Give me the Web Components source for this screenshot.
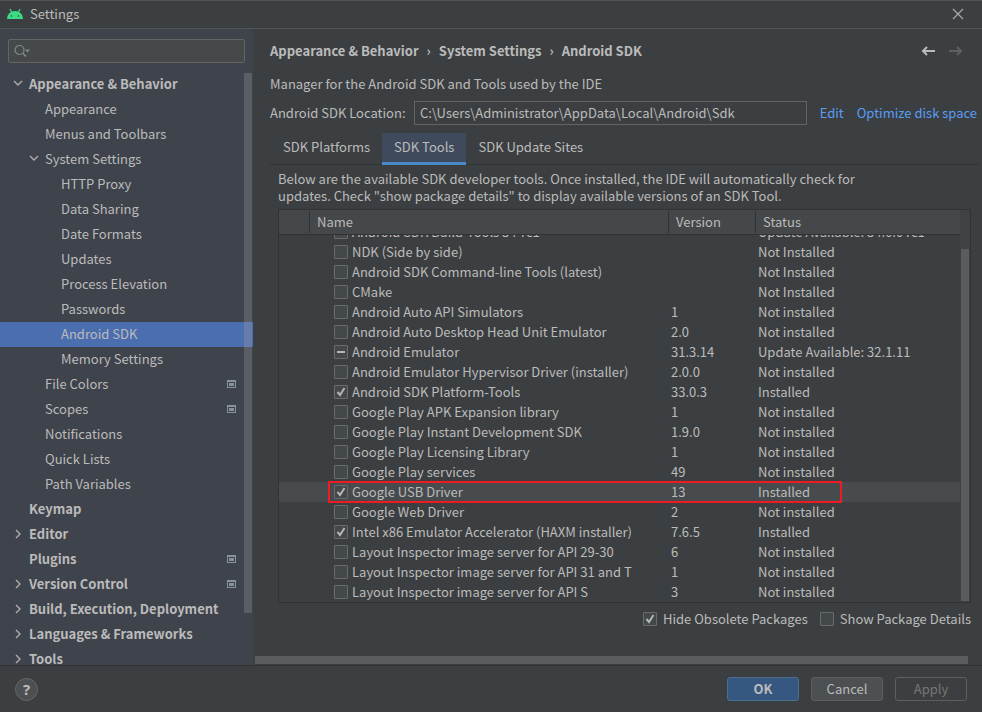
<!DOCTYPE html>
<html lang="en">
<head>
<meta charset="utf-8">
<title>Settings</title>
<style>
  html, body { height: 100%; margin: 0; }
  body {
    background: #3c3f41;
    color: #bbbbbb;
    font: 13px/20px "Noto Sans CJK SC", "Noto Sans", sans-serif;
    --panel: #3c3f41;
    --sidebar: #3f434c;
    --line: #323232;
    --border: #646464;
    --muted: #777777;
    --link: #589df6;
    --select: #4b6eaf;
  }
</style>
</head>
<body>
<settings-dialog>
  <title-bar slot="title">Settings</title-bar>

  <settings-sidebar slot="sidebar">
    <tree-item level="0" state="open">Appearance &amp; Behavior</tree-item>
    <tree-item level="1">Appearance</tree-item>
    <tree-item level="1">Menus and Toolbars</tree-item>
    <tree-item level="1" state="open">System Settings</tree-item>
    <tree-item level="2">HTTP Proxy</tree-item>
    <tree-item level="2">Data Sharing</tree-item>
    <tree-item level="2">Date Formats</tree-item>
    <tree-item level="2">Updates</tree-item>
    <tree-item level="2">Process Elevation</tree-item>
    <tree-item level="2">Passwords</tree-item>
    <tree-item level="2" selected>Android SDK</tree-item>
    <tree-item level="2">Memory Settings</tree-item>
    <tree-item level="1" project>File Colors</tree-item>
    <tree-item level="1" project>Scopes</tree-item>
    <tree-item level="1">Notifications</tree-item>
    <tree-item level="1">Quick Lists</tree-item>
    <tree-item level="1">Path Variables</tree-item>
    <tree-item level="0">Keymap</tree-item>
    <tree-item level="0" state="closed">Editor</tree-item>
    <tree-item level="0" project>Plugins</tree-item>
    <tree-item level="0" state="closed" project>Version Control</tree-item>
    <tree-item level="0" state="closed">Build, Execution, Deployment</tree-item>
    <tree-item level="0" state="closed">Languages &amp; Frameworks</tree-item>
    <tree-item level="0" state="closed">Tools</tree-item>
  </settings-sidebar>

  <sdk-page slot="page">
    <crumb-bar slot="crumbs"></crumb-bar>
    <sdk-location slot="location"></sdk-location>
    <tab-strip slot="tabs"></tab-strip>
    <sdk-table slot="table"></sdk-table>
    <check-box slot="options" checked>Hide Obsolete Packages</check-box>
    <check-box slot="options">Show Package Details</check-box>
  </sdk-page>

  <dialog-button slot="actions" kind="primary">OK</dialog-button>
  <dialog-button slot="actions">Cancel</dialog-button>
  <dialog-button slot="actions" kind="disabled">Apply</dialog-button>
</settings-dialog>

<script>
class SettingsDialog extends HTMLElement {
  connectedCallback() {
    this.attachShadow({ mode: "open" })
    this.shadowRoot.innerHTML = `
      <style>
        :host {
          display: flex;
          flex-direction: column;
          height: 100vh;
          overflow: hidden;
          background: var(--panel);
        }

        main {
          flex: 1;
          min-height: 0;
          display: grid;
          grid-template-columns: 253px minmax(0, 1fr);
          grid-template-rows: minmax(0, 1fr);
        }

        footer {
          box-sizing: border-box;
          height: 47px;
          display: flex;
          align-items: center;
          gap: 12px;
          padding: 0 15px;
          border-top: 1px solid var(--line);
        }

        .help {
          box-sizing: border-box;
          width: 23px;
          height: 23px;
          padding: 0;
          margin-right: auto;
          border: 1px solid #646668;
          border-radius: 50%;
          background: #4c5052;
          color: inherit;
          font: bold 15px/20px "Noto Sans", sans-serif;
        }
      </style>

      <slot name="title"></slot>
      <main>
        <slot name="sidebar"></slot>
        <slot name="page"></slot>
      </main>
      <footer>
        <button class="help" aria-label="Help">?</button>
        <slot name="actions"></slot>
      </footer>
    `
  }
}

class TitleBar extends HTMLElement {
  connectedCallback() {
    this.attachShadow({ mode: "open" })
    this.shadowRoot.innerHTML = `
      <style>
        :host {
          box-sizing: border-box;
          display: flex;
          align-items: center;
          gap: 7px;
          height: 29px;
          padding: 0 18px 1px 7px;
          border-top: 1px solid #515456;
          border-bottom: 1px solid #515456;
        }

        button {
          display: flex;
          margin-left: auto;
          padding: 0;
          border: 0;
          background: none;
        }
      </style>

      <svg width="16" height="16" viewBox="0 0 16 16">
        <path d="M0 13a8 8 0 0 1 16 0z" fill="#3ddc84"/>
        <path d="M3 3l2 4M13 3l-2 4" stroke="#3ddc84" stroke-width="1.2" fill="none"/>
        <circle cx="4.5" cy="10" r="0.8" fill="#2b4d3b"/>
        <circle cx="11.5" cy="10" r="0.8" fill="#2b4d3b"/>
      </svg>
      <span><slot></slot></span>
      <button aria-label="Close">
        <svg width="12" height="12" viewBox="0 0 12 12">
          <path d="M1 1l10 10M11 1L1 11" stroke="#a8a9aa" stroke-width="1.2" fill="none"/>
        </svg>
      </button>
    `
  }
}

class SettingsSidebar extends HTMLElement {
  connectedCallback() {
    this.attachShadow({ mode: "open" })
    this.shadowRoot.innerHTML = `
      <style>
        :host {
          display: flex;
          flex-direction: column;
          min-height: 0;
          background: var(--sidebar);
        }

        label {
          box-sizing: border-box;
          display: flex;
          align-items: center;
          height: 24px;
          margin: 10px 8px 9px;
          padding: 0 5px;
          border: 1px solid var(--border);
          border-radius: 2px;
          background: #45494a;
        }

        input {
          flex: 1;
          min-width: 0;
          border: 0;
          outline: 0;
          background: none;
          color: inherit;
          font: inherit;
        }

        .tree {
          position: relative;
          flex: 1;
          min-height: 0;
          overflow: hidden;
        }

        .thumb {
          position: absolute;
          top: 1px;
          right: 1px;
          width: 8px;
          height: 91%;
          background: rgba(166, 166, 166, 0.28);
        }
      </style>

      <label>
        <svg width="17" height="14" viewBox="0 0 17 14">
          <circle cx="5.5" cy="6" r="4.500" stroke="#7f8b91" stroke-width="1.2" fill="none"/>
          <path d="M9 9.5l3 3" stroke="#7f8b91" stroke-width="1.600"/>
          <path d="M11 5.5h5l-2.500 3z" fill="#7f8b91"/>
        </svg>
        <input type="text" aria-label="Search settings">
      </label>
      <div class="tree">
        <slot></slot>
        <div class="thumb"></div>
      </div>
    `
  }
}

class TreeItem extends HTMLElement {
  connectedCallback() {
    const level = Number(this.getAttribute("level"))
    const state = this.getAttribute("state")
    const arrows = { open: "M2 3l4 4 4-4", closed: "M4 2l4 4-4 4" }

    this.attachShadow({ mode: "open" })
    this.shadowRoot.innerHTML = `
      <style>
        :host {
          box-sizing: border-box;
          display: flex;
          align-items: center;
          height: 25px;
          padding-right: 17px;
          padding-bottom: 2px;
          padding-left: ${12 + level * 16}px;
          font-weight: ${level === 0 ? "bold" : "normal"};
        }

        :host([selected]) {
          background: var(--select);
        }

        .arrow {
          width: 12px;
          height: 12px;
          margin-right: 5px;
        }

        .text {
          flex: 1;
          white-space: nowrap;
        }
      </style>

      <svg class="arrow" viewBox="0 0 12 12">
        ${state ? `<path d="${arrows[state]}" stroke="#adadad" stroke-width="1.4" fill="none"/>` : ""}
      </svg>
      <span class="text"><slot></slot></span>
      ${this.hasAttribute("project") ? `
        <svg width="9" height="8" viewBox="0 0 9 8">
          <path d="M0 0h9v8H0zM1 2v5h7V2z" fill="#87939a" fill-rule="evenodd"/>
          <path d="M2 3h5v3H2z" fill="#87939a"/>
        </svg>` : ""}
    `
  }
}

class SdkPage extends HTMLElement {
  connectedCallback() {
    this.attachShadow({ mode: "open" })
    this.shadowRoot.innerHTML = `
      <style>
        :host {
          display: flex;
          flex-direction: column;
          min-width: 0;
          min-height: 0;
        }

        .body {
          flex: 1;
          min-height: 0;
          display: flex;
          flex-direction: column;
          padding: 12px 3px 0 17px;
        }

        p { margin: 0; }

        .intro { margin: 13px 0 7px; }

        .note {
          padding: 5px 8px;
          line-height: 17px;
        }

        .options {
          display: flex;
          justify-content: flex-end;
          gap: 12px;
          padding: 6px 8px 27px 0;
        }

        .hscroll {
          height: 8px;
          margin: 0 14px 1px 2px;
          background: #5a5c5d;
        }
      </style>

      <div class="body">
        <slot name="crumbs"></slot>
        <p class="intro">Manager for the Android SDK and Tools used by the IDE</p>
        <slot name="location"></slot>
        <slot name="tabs"></slot>
        <p class="note">Below are the available SDK developer tools. Once installed, the IDE will automatically check for<br>updates. Check "show package details" to display available versions of an SDK Tool.</p>
        <slot name="table"></slot>
        <div class="options"><slot name="options"></slot></div>
      </div>
      <div class="hscroll"></div>
    `
  }
}

class CrumbBar extends HTMLElement {
  connectedCallback() {
    this.attachShadow({ mode: "open" })
    this.shadowRoot.innerHTML = `
      <style>
        :host {
          display: flex;
          align-items: center;
          padding-right: 16px;
        }

        nav {
          flex: 1;
          display: flex;
          gap: 8px;
          font-weight: bold;
        }

        i {
          font-style: normal;
        }

        button {
          display: flex;
          margin-left: 12px;
          padding: 0;
          border: 0;
          background: none;
          color: inherit;
        }

        button:disabled { color: #5e6163; }
      </style>

      <nav aria-label="Breadcrumb">
        <span>Appearance &amp; Behavior</span><i>›</i>
        <span>System Settings</span><i>›</i>
        <span>Android SDK</span>
      </nav>
      <button aria-label="Back">
        <svg width="15" height="12" viewBox="0 0 15 12">
          <path d="M14 6H2M6 2L2 6l4 4" stroke="currentColor" stroke-width="2" fill="none"/>
        </svg>
      </button>
      <button aria-label="Forward" disabled>
        <svg width="15" height="12" viewBox="0 0 15 12">
          <path d="M1 6h12M9 2l4 4-4 4" stroke="currentColor" stroke-width="2" fill="none"/>
        </svg>
      </button>
    `
  }
}

class SdkLocation extends HTMLElement {
  connectedCallback() {
    this.attachShadow({ mode: "open" })
    this.shadowRoot.innerHTML = `
      <style>
        :host {
          display: flex;
          align-items: center;
          padding-right: 2px;
        }

        label { width: 144px; }

        input {
          box-sizing: border-box;
          flex: 1;
          min-width: 0;
          height: 24px;
          padding: 0 5px 1px;
          border: 1px solid var(--border);
          background: var(--panel);
          color: inherit;
          font: inherit;
        }

        a {
          margin-left: 13px;
          color: var(--link);
          text-decoration: none;
        }
      </style>

      <label for="path">Android SDK Location:</label>
      <input id="path" type="text" readonly value="C:\\Users\\Administrator\\AppData\\Local\\Android\\Sdk">
      <a href="#edit">Edit</a>
      <a href="#optimize">Optimize disk space</a>
    `
  }
}

class TabStrip extends HTMLElement {
  connectedCallback() {
    this.attachShadow({ mode: "open" })
    this.shadowRoot.innerHTML = `
      <style>
        :host {
          display: flex;
          margin-top: 8px;
          padding-left: 1px;
          border-bottom: 1px solid var(--line);
        }

        button {
          height: 32px;
          padding: 0 12px 4px;
          margin-bottom: -1px;
          border: 0;
          background: none;
          color: inherit;
          font: inherit;
        }

        button[aria-selected="true"] {
          padding-bottom: 1px;
          border-bottom: 3px solid #4a88c7;
          background: #3f4b5d;
        }
      </style>

      <button role="tab" aria-selected="false">SDK Platforms</button>
      <button role="tab" aria-selected="true">SDK Tools</button>
      <button role="tab" aria-selected="false">SDK Update Sites</button>
    `
  }
}

class CheckBox extends HTMLElement {
  connectedCallback() {
    const mixed = this.hasAttribute("mixed")
    const checked = this.hasAttribute("checked")
    const mark = mixed ? "M3 7h8" : "M3.500 7l2.500 3 4.500-7"

    this.attachShadow({ mode: "open" })
    this.shadowRoot.innerHTML = `
      <style>
        :host { display: block; }

        label {
          display: flex;
          align-items: center;
          gap: var(--gap, 6px);
          white-space: nowrap;
        }

        .box {
          display: grid;
          width: 14px;
          height: 14px;
        }

        input, svg {
          grid-area: 1 / 1;
          width: 14px;
          height: 14px;
          margin: 0;
        }

        input {
          appearance: none;
          box-sizing: border-box;
          border: 1px solid #6b6b6b;
          border-radius: 1px;
          background: #43494a;
        }

        svg {
          pointer-events: none;
          visibility: hidden;
        }

        input:checked + svg, input:indeterminate + svg { visibility: visible; }
      </style>

      <label>
        <span class="box">
          <input type="checkbox" ${checked ? "checked" : ""}>
          <svg viewBox="0 0 14 14"><path d="${mark}" stroke="#b4b4b4" stroke-width="2" fill="none"/></svg>
        </span>
        <slot></slot>
      </label>
    `
    this.shadowRoot.querySelector("input").indeterminate = mixed
  }
}

const tools = [
  ["Android SDK Build-Tools 34-rc1", "", "Update Available: 34.0.0 rc1"],
  ["NDK (Side by side)", "", "Not Installed"],
  ["Android SDK Command-line Tools (latest)", "", "Not Installed"],
  ["CMake", "", "Not Installed"],
  ["Android Auto API Simulators", "1", "Not installed"],
  ["Android Auto Desktop Head Unit Emulator", "2.0", "Not installed"],
  ["Android Emulator", "31.3.14", "Update Available: 32.1.11", "mixed"],
  ["Android Emulator Hypervisor Driver (installer)", "2.0.0", "Not installed"],
  ["Android SDK Platform-Tools", "33.0.3", "Installed", "checked"],
  ["Google Play APK Expansion library", "1", "Not installed"],
  ["Google Play Instant Development SDK", "1.9.0", "Not installed"],
  ["Google Play Licensing Library", "1", "Not installed"],
  ["Google Play services", "49", "Not installed"],
  ["Google USB Driver", "13", "Installed", "checked"],
  ["Google Web Driver", "2", "Not installed"],
  ["Intel x86 Emulator Accelerator (HAXM installer)", "7.6.5", "Installed", "checked"],
  ["Layout Inspector image server for API 29-30", "6", "Not installed"],
  ["Layout Inspector image server for API 31 and T", "1", "Not installed"],
  ["Layout Inspector image server for API S", "3", "Not installed"],
]
const current = "Google USB Driver"

class SdkTable extends HTMLElement {
  connectedCallback() {
    this.attachShadow({ mode: "open" })
    this.shadowRoot.innerHTML = `
      <style>
        :host {
          flex: 1;
          min-height: 0;
          display: flex;
          margin: 0 8px;
          border: 1px solid var(--line);
        }

        .scroller {
          flex: 1;
          min-width: 0;
          overflow: hidden;
        }

        table {
          width: 100%;
          table-layout: fixed;
          border-collapse: separate;
          border-spacing: 0;
        }

        .gutter { width: 30px; }
        .version { width: 87px; }
        .status { width: 205px; }

        th, td {
          padding: 0;
          text-align: left;
          white-space: nowrap;
        }

        th {
          position: sticky;
          top: 0;
          z-index: 2;
          box-sizing: border-box;
          height: 25px;
          padding-left: 8px;
          border-bottom: 1px solid var(--line);
          background: #45484a linear-gradient(var(--line), var(--line)) no-repeat 0 1px / 1px 22px;
          font-weight: normal;
        }

        th:first-child { background: #45484a; }

        td { height: 20px; }
        td.name { padding-left: 25px; --gap: 4px; }
        td.value { padding-left: 3px; }

        tr.current {
          position: relative;
          background: #484b4d;
        }

        .mark {
          position: absolute;
          inset: -1px 118px -1px 49px;
          border: 2px solid #ed1c24;
          pointer-events: none;
        }

        .track {
          display: flex;
          flex-direction: column;
          justify-content: flex-end;
          width: 10px;
          padding-bottom: 1px;
          box-sizing: border-box;
          background: #3f4244;
        }

        .thumb {
          height: 90%;
          margin: 0 1px;
          background: #5a5c5d;
        }
      </style>

      <div class="scroller">
        <table>
          <colgroup><col class="gutter"><col><col class="version"><col class="status"></colgroup>
          <thead>
            <tr><th></th><th>Name</th><th>Version</th><th>Status</th></tr>
          </thead>
          <tbody>
            ${tools.map(([name, version, status, state = ""]) => `
              <tr${name === current ? ' class="current"' : ""}>
                <td></td>
                <td class="name"><check-box ${state}>${name}</check-box>${name === current ? '<div class="mark"></div>' : ""}</td>
                <td class="value">${version}</td>
                <td class="value">${status}</td>
              </tr>`).join("")}
          </tbody>
        </table>
      </div>
      <div class="track"><div class="thumb"></div></div>
    `
  }

  scrollToEnd() {
    const scroller = this.shadowRoot.querySelector(".scroller")
    scroller.scrollTop = scroller.scrollHeight
  }
}

class DialogButton extends HTMLElement {
  connectedCallback() {
    this.attachShadow({ mode: "open" })
    this.shadowRoot.innerHTML = `
      <style>
        :host { display: block; }

        button {
          box-sizing: border-box;
          width: 72px;
          height: 24px;
          padding: 0;
          border: 1px solid #5e6060;
          border-radius: 3px;
          background: #4c5052;
          color: inherit;
          font: inherit;
        }

        :host([kind="primary"]) button {
          border-color: #4c708c;
          background: #365880;
          font-weight: bold;
        }

        button:disabled {
          background: none;
          color: var(--muted);
        }
      </style>

      <button ${this.getAttribute("kind") === "disabled" ? "disabled" : ""}><slot></slot></button>
    `
  }
}

customElements.define("settings-dialog", SettingsDialog)
customElements.define("title-bar", TitleBar)
customElements.define("settings-sidebar", SettingsSidebar)
customElements.define("tree-item", TreeItem)
customElements.define("sdk-page", SdkPage)
customElements.define("crumb-bar", CrumbBar)
customElements.define("sdk-location", SdkLocation)
customElements.define("tab-strip", TabStrip)
customElements.define("check-box", CheckBox)
customElements.define("sdk-table", SdkTable)
customElements.define("dialog-button", DialogButton)

document.querySelector("sdk-table").scrollToEnd()
</script>
</body>
</html>
